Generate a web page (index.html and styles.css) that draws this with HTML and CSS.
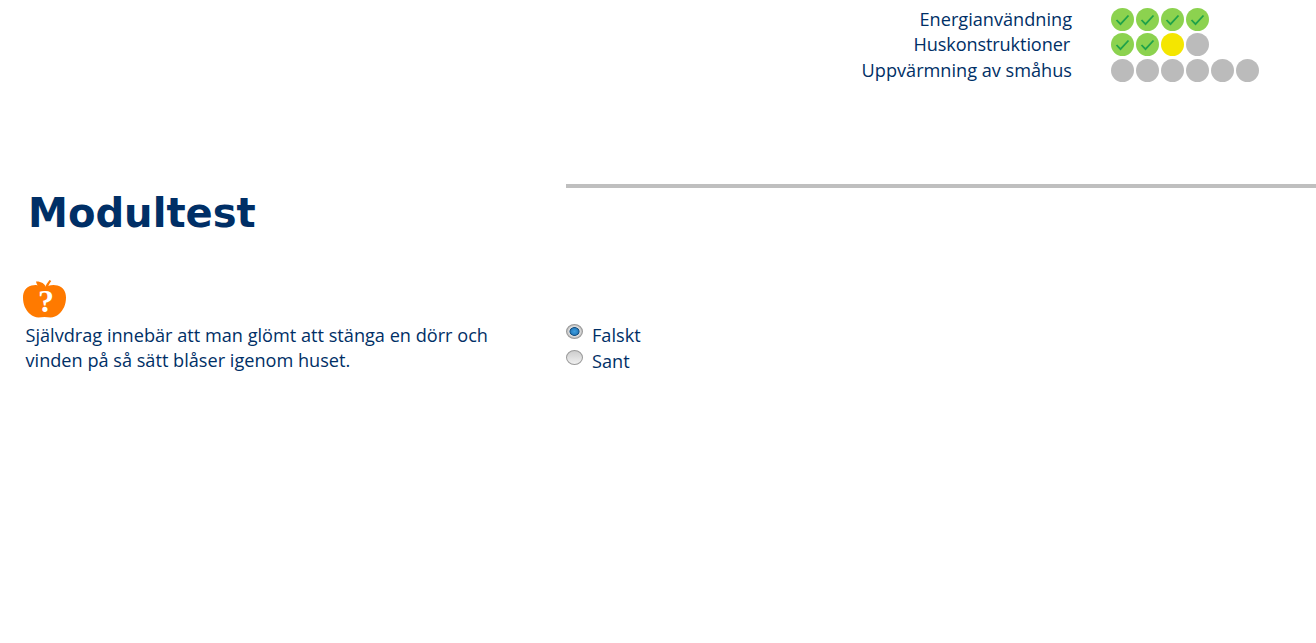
FILE: index.html
```html
<!DOCTYPE html>
<html lang="sv">
<head>
    <meta charset="UTF-8">
    <meta name="viewport" content="width=device-width, initial-scale=1.0">
    <title>Modultest</title>
    <link rel="stylesheet" href="styles.css">
</head>
<body>
    <svg class="symboler" width="0" height="0">
        <symbol id="bock" viewBox="0 0 23 23">
            <path d="M5.500 12l4 4.200 8-8.700" fill="none" stroke="#1fa24a" stroke-width="1.800"/>
        </symbol>
    </svg>

    <div class="moduler">
        <div class="modul">
            <div class="modul-namn">Energianvändning</div>
            <div class="prickar">
                <span class="prick klar"><svg><use href="#bock"/></svg></span>
                <span class="prick klar"><svg><use href="#bock"/></svg></span>
                <span class="prick klar"><svg><use href="#bock"/></svg></span>
                <span class="prick klar"><svg><use href="#bock"/></svg></span>
            </div>
        </div>
        <div class="modul modul-mitten">
            <div class="modul-namn namn-kort">Huskonstruktioner</div>
            <div class="prickar">
                <span class="prick klar"><svg><use href="#bock"/></svg></span>
                <span class="prick klar"><svg><use href="#bock"/></svg></span>
                <span class="prick pagar"></span>
                <span class="prick"></span>
            </div>
        </div>
        <div class="modul">
            <div class="modul-namn">Uppvärmning av småhus</div>
            <div class="prickar">
                <span class="prick"></span>
                <span class="prick"></span>
                <span class="prick"></span>
                <span class="prick"></span>
                <span class="prick"></span>
                <span class="prick"></span>
            </div>
        </div>
    </div>

    <div class="rubrikrad">
        <h1>Modultest</h1>
        <div class="linje"></div>
    </div>

    <div class="fraga">
        <div class="fraga-text">
            <svg class="apple" viewBox="0 0 44 40" width="44" height="40">
                <path d="M13 1.500c4.500-.3 9 2 10 6l-1 3c-4.500-1-8-4.500-9-9z" fill="#ff7a00"/>
                <path d="M22 8c.8-3 2.600-5.500 4.500-8l1.800 1c-1.800 2.400-3.200 4.800-3.900 7.500z" fill="#ff7a00"/>
                <path d="M21.500 8c3-2.500 8-3.800 13-2.500 6 1.600 8.500 6.500 8.500 12 0 7-2.500 12.500-7 16.500-2.500 2.300-5.500 3.500-8.500 3.500-2 0-4-.6-6-.6s-4 .6-6 .6c-3 0-6-1.200-8.500-3.500C2.500 30 0 24.500 0 17.500c0-5.500 2.500-10.400 8.500-12 5-1.300 10 0 13 2.500z" fill="#ff7a00"/>
                <text x="23" y="32" class="apple-tecken">?</text>
            </svg>
            <p>Självdrag innebär att man glömt att stänga en dörr och vinden på så sätt blåser igenom huset.</p>
        </div>
        <div class="svar">
            <label class="alternativ"><input type="radio" name="svar" checked> Falskt</label>
            <label class="alternativ"><input type="radio" name="svar"> Sant</label>
        </div>
    </div>
</body>
</html>
```

FILE: styles.css
```css
body {
    margin: 0;
    font-family: "Open Sans", sans-serif;
    font-size: 18.150px;
    color: #002f66;
    background: white;
    overflow: hidden;
}

.symboler {
    display: block;
}

.moduler {
    padding-top: 7px;
    height: 184px;
    box-sizing: border-box;
}

.modul {
    display: flex;
    height: 25px;
}

.modul-mitten {
    height: 26px;
}

.modul-namn {
    width: 1072px;
    text-align: right;
    line-height: 25px;
}

.namn-kort {
    width: 1070px;
    margin-right: 2px;
    letter-spacing: -0.120px;
}

.prickar {
    display: flex;
    gap: 2px;
    margin: 0.500px 0 0 39px;
}

.prick {
    width: 23px;
    height: 23px;
    border-radius: 50%;
    background: #bbbbbb;
}

.prick svg {
    display: block;
    width: 23px;
    height: 23px;
}

.prick.klar {
    background: #8cd24f;
}

.prick.pagar {
    background: #f4e600;
}

.rubrikrad {
    display: flex;
}

h1 {
    width: 538px;
    margin: 0 0 0 28px;
    padding-top: 4px;
    font-family: "DejaVu Sans", sans-serif;
    font-size: 40.100px;
    line-height: 50px;
    font-weight: bold;
}

.linje {
    flex: 1;
    height: 4px;
    background: #bfbfbf;
}

.fraga {
    display: flex;
    margin-top: 42px;
}

.fraga-text {
    width: 540px;
    padding-left: 23px;
    box-sizing: border-box;
}

.apple {
    display: block;
}

.apple-tecken {
    font-family: "Liberation Serif", serif;
    font-size: 32px;
    font-weight: bold;
    fill: white;
    text-anchor: middle;
}

.fraga-text p {
    width: 480px;
    margin: 3px 0 0 2.500px;
    line-height: 25px;
}

.svar {
    margin: 42px 0 0 26px;
}

.alternativ {
    display: flex;
    align-items: center;
    gap: 9px;
    height: 26px;
}

.alternativ input {
    appearance: none;
    width: 17px;
    height: 15px;
    margin: 0 0 8px 0;
    border: 1px solid #9a9a9a;
    border-radius: 50%;
    background: linear-gradient(#cdcdcd, #f0f0f0);
    box-sizing: border-box;
}

.alternativ input:checked {
    background: radial-gradient(ellipse closest-side, #3f9fe0 0, #2a82c4 45%, #17507f 62%, #e2e2e2 72%, #bdbdbd 100%);
}
```
